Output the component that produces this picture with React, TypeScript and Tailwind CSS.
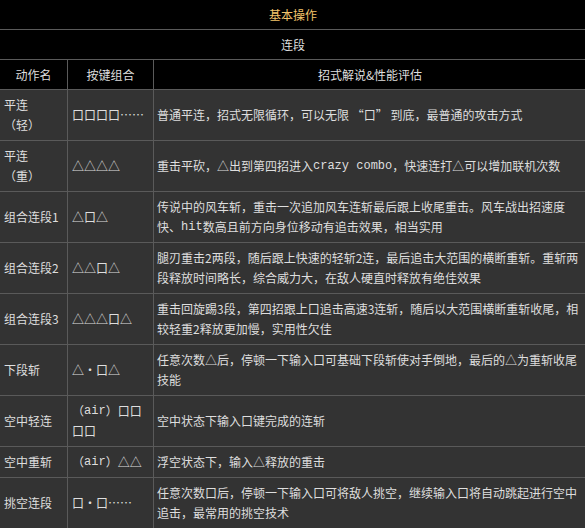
type Move = {
    name: React.ReactNode;
    keys: React.ReactNode;
    desc: React.ReactNode;
    lines: 1 | 2;
};

const mono = (s: string) => (
    <span className="align-top font-['Liberation_Mono',monospace]">{s}</span>
);

const MOVES: Move[] = [
    {
        name: <>平连<br />（轻）</>,
        keys: '口口口口……',
        desc: '普通平连，招式无限循环，可以无限 “口” 到底，最普通的攻击方式',
        lines: 2,
    },
    {
        name: <>平连<br />（重）</>,
        keys: '△△△△',
        desc: (
            <>
                重击平砍，△出到第四招进入{mono('crazy combo')}，快速连打△可以增加联机次数
            </>
        ),
        lines: 2,
    },
    {
        name: '组合连段1',
        keys: '△口△',
        desc: (
            <>
                传说中的风车斩，重击一次追加风车连斩最后跟上收尾重击。风车战出招速度快、{mono('hit')}
                数高且前方向身位移动有追击效果，相当实用
            </>
        ),
        lines: 2,
    },
    {
        name: '组合连段2',
        keys: '△△口△',
        desc: '腿刃重击2两段，随后跟上快速的轻斩2连，最后追击大范围的横断重斩。重斩两段释放时间略长，综合威力大，在敌人硬直时释放有绝佳效果',
        lines: 2,
    },
    {
        name: '组合连段3',
        keys: '△△△口△',
        desc: '重击回旋踢3段，第四招跟上口追击高速3连斩，随后以大范围横断重斩收尾，相较轻重2释放更加慢，实用性欠佳',
        lines: 2,
    },
    {
        name: '下段斩',
        keys: '△・口△',
        desc: '任意次数△后，停顿一下输入口可基础下段斩使对手倒地，最后的△为重斩收尾技能',
        lines: 2,
    },
    {
        name: '空中轻连',
        keys: <>（{mono('air')}）口口<br />口口</>,
        desc: '空中状态下输入口键完成的连斩',
        lines: 2,
    },
    {
        name: '空中重斩',
        keys: <>（{mono('air')}）△△</>,
        desc: '浮空状态下，输入△释放的重击',
        lines: 1,
    },
    {
        name: '挑空连段',
        keys: '口・口……',
        desc: '任意次数口后，停顿一下输入口可将敌人挑空，继续输入口将自动跳起进行空中追击，最常用的挑空技术',
        lines: 2,
    },
];

const cell = 'border border-[#5a5a5a]';

function Cell({ lines, className, children }: { lines: 1 | 2; className: string; children: React.ReactNode }) {
    return (
        <td className={`${cell} py-[5px] align-middle leading-5 ${className}`}>
            <div className={`flex flex-col justify-center ${lines === 2 ? 'h-10' : 'h-5'}`}>
                <div>{children}</div>
            </div>
        </td>
    );
}

export default function App() {
    return (
        <div
            lang="zh-CN"
            className="h-[528px] w-[585px] overflow-hidden bg-[#333333] font-['Noto_Sans_CJK_SC',sans-serif] text-[12px] text-[#dedede]"
        >
            <table className="-ml-px -mt-px w-[587px] table-fixed border-collapse">
                <colgroup>
                    <col className="w-[68px]" />
                    <col className="w-[86px]" />
                    <col className="w-[433px]" />
                </colgroup>
                <thead className="bg-black">
                    <tr>
                        <th
                            colSpan={3}
                            className={`${cell} py-1 text-center font-normal leading-[21px] text-[#f3c46c]`}
                        >
                            基本操作
                        </th>
                    </tr>
                    <tr>
                        <th colSpan={3} className={`${cell} py-1 text-center font-normal leading-[21px]`}>
                            连段
                        </th>
                    </tr>
                    <tr>
                        <th className={`${cell} py-1 text-center font-normal leading-[21px]`}>动作名</th>
                        <th className={`${cell} py-1 text-center font-normal leading-[21px]`}>按键组合</th>
                        <th className={`${cell} py-1 text-center font-normal leading-[21px]`}>
                            招式解说&amp;性能评估
                        </th>
                    </tr>
                </thead>
                <tbody>
                    {MOVES.map((m, i) => (
                        <tr key={i}>
                            <Cell lines={m.lines} className="px-1">{m.name}</Cell>
                            <Cell lines={m.lines} className="px-1">{m.keys}</Cell>
                            <Cell lines={m.lines} className="pl-[3px] pr-1">{m.desc}</Cell>
                        </tr>
                    ))}
                </tbody>
            </table>
        </div>
    );
}
